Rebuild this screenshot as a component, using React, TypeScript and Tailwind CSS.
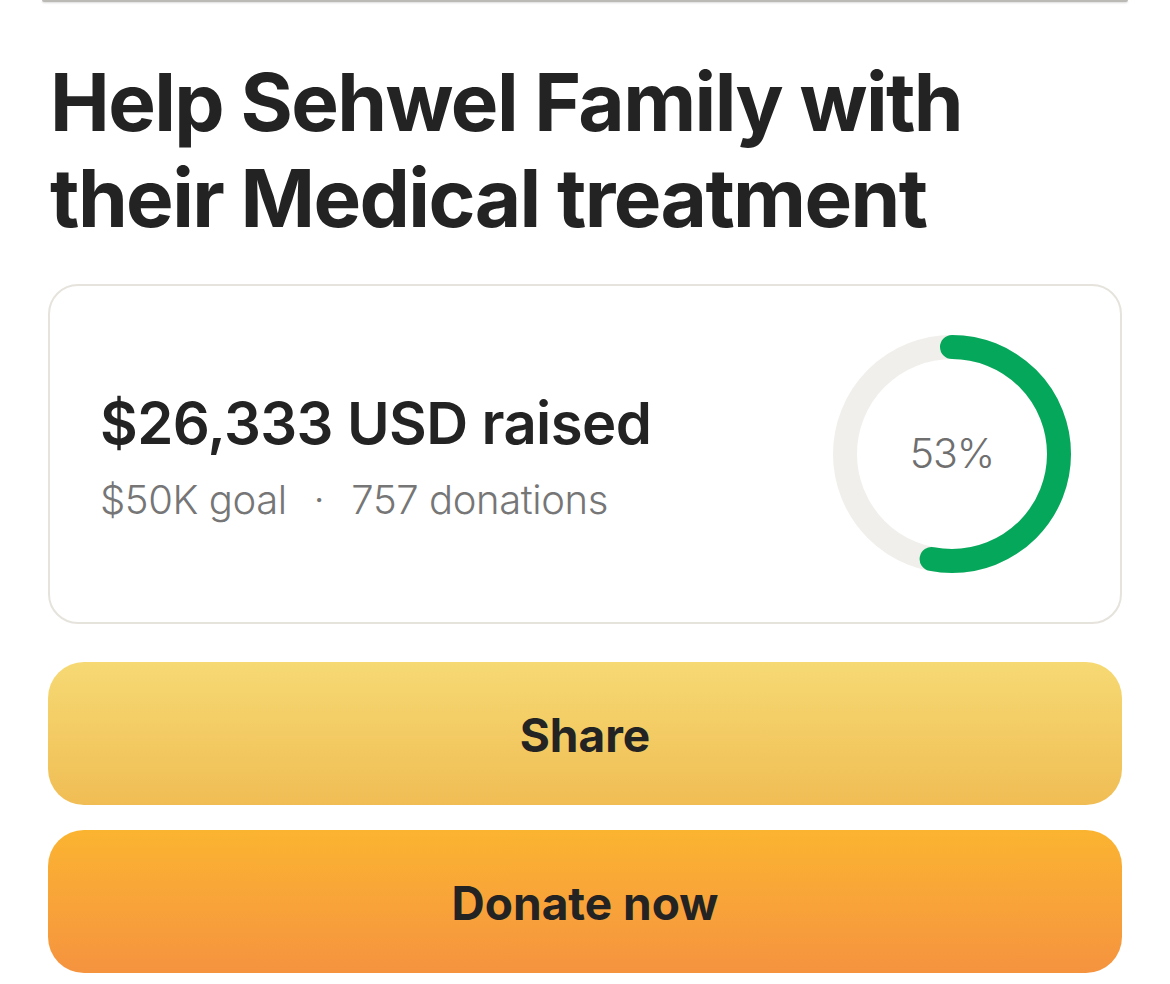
import React from 'react';

const font = { fontFamily: 'Inter, "Noto Sans", sans-serif' };

const ProgressRing = ({ percent }: { percent: number }) => {
  const r = 107;
  const c = 2 * Math.PI * r;
  return (
    <div className="relative w-[238px] h-[238px] shrink-0">
      <svg width="238" height="238" viewBox="0 0 238 238" className="-rotate-90">
        <circle cx="119" cy="119" r={r} fill="none" stroke="#f0efeb" strokeWidth="24" />
        <circle
          cx="119"
          cy="119"
          r={r}
          fill="none"
          stroke="#05a85b"
          strokeWidth="24"
          strokeLinecap="round"
          strokeDasharray={`${(c * percent) / 100} ${c}`}
        />
      </svg>
      <div className="absolute inset-0 flex items-center justify-center text-[41px] font-light text-[#6f6f6f] tracking-tight">
        {percent}%
      </div>
    </div>
  );
};

export default function App() {
  return (
    <div className="w-[1170px] h-[984px] bg-white overflow-hidden" style={font}>
      <div className="mx-[42px] h-[2px] bg-[#bcbab5] rounded-b-full shadow-[0_1px_2px_rgba(0,0,0,0.15)]" />
      <div className="px-[48px]">
        <h1 className="mt-[52px] pl-[2px] text-[80px] leading-[96px] font-bold text-[#232323] tracking-[-0.02em]">
          Help Sehwel Family with
          <br />
          their Medical treatment
        </h1>

        <div className="mt-[38px] h-[340px] rounded-[30px] border-2 border-[#e6e3dc] flex items-center justify-between pl-[50px] pr-[49px]">
          <div className="flex flex-col pt-[6px]">
            <div className="text-[58px] leading-[64px] font-semibold text-[#232323] tracking-[-0.01em]">
              $26,333 USD raised
            </div>
            <div className="mt-[21px] text-[40px] leading-[48px] font-light text-[#767676] tracking-[-0.01em]">
              $50K goal <span className="mx-[16px]">·</span> 757 donations
            </div>
          </div>
          <ProgressRing percent={53} />
        </div>

        <button className="mt-[38px] w-full h-[143px] rounded-[36px] bg-gradient-to-b from-[#f6d973] to-[#f0bd54] flex items-center justify-center pt-[4px] text-[46px] font-bold text-[#232323]">
          Share
        </button>
        <button className="mt-[25px] w-full h-[143px] rounded-[36px] bg-gradient-to-b from-[#fbb430] to-[#f5933f] flex items-center justify-center pt-[4px] text-[46px] font-bold text-[#232323]">
          Donate now
        </button>
      </div>
    </div>
  );
}
